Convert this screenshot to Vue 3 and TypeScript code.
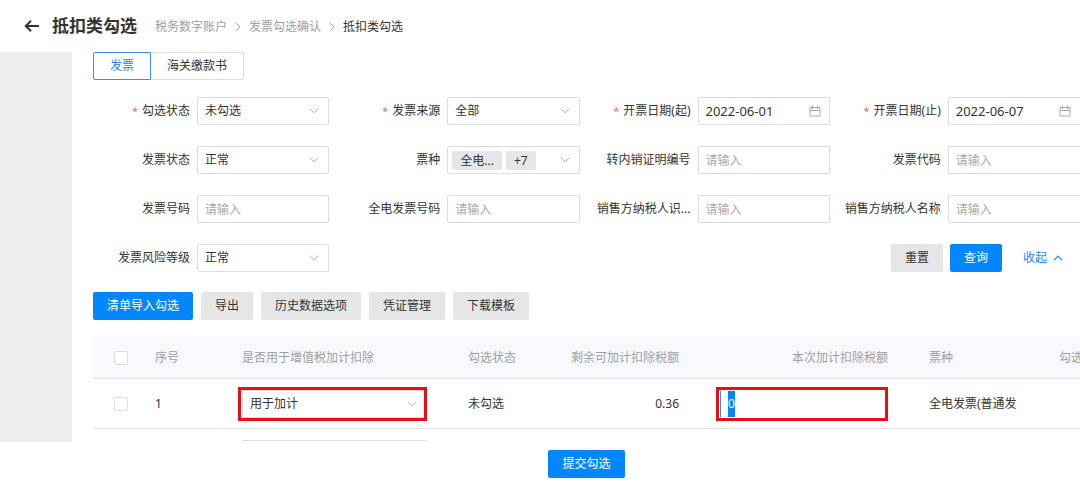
<script setup lang="ts">
import { onMounted, ref } from 'vue'

type Kind = 'select' | 'text' | 'date' | 'tags'
interface Field {
  id: string
  label: string
  kind: Kind
  value?: string
  required?: boolean
}

const fields = ref<Field[]>([
  { id: 'check-state', label: '勾选状态', kind: 'select', value: '未勾选', required: true },
  { id: 'source', label: '发票来源', kind: 'select', value: '全部', required: true },
  { id: 'date-from', label: '开票日期(起)', kind: 'date', value: '2022-06-01', required: true },
  { id: 'date-to', label: '开票日期(止)', kind: 'date', value: '2022-06-07', required: true },
  { id: 'state', label: '发票状态', kind: 'select', value: '正常' },
  { id: 'kind', label: '票种', kind: 'tags' },
  { id: 'export-no', label: '转内销证明编号', kind: 'text', value: '' },
  { id: 'code', label: '发票代码', kind: 'text', value: '' },
  { id: 'number', label: '发票号码', kind: 'text', value: '' },
  { id: 'e-number', label: '全电发票号码', kind: 'text', value: '' },
  { id: 'seller-id', label: '销售方纳税人识...', kind: 'text', value: '' },
  { id: 'seller-name', label: '销售方纳税人名称', kind: 'text', value: '' },
  { id: 'risk', label: '发票风险等级', kind: 'select', value: '正常' },
])

const tabs = ['发票', '海关缴款书']
const activeTab = ref('发票')
const tools = ['清单导入勾选', '导出', '历史数据选项', '凭证管理', '下载模板']
const usage = ref('用于加计')
const amount = ref('0')
const amountInput = ref<HTMLInputElement | null>(null)

onMounted(() => {
  amountInput.value?.focus({ preventScroll: true })
  amountInput.value?.select()
})
</script>

<template>
  <div class="page">
    <header class="top">
      <button class="back" type="button" aria-label="返回">
        <svg width="16" height="14" viewBox="0 0 16 14"><path d="M15 7H2M7 1.8 1.8 7 7 12.2" /></svg>
      </button>
      <h1>抵扣类勾选</h1>
      <nav class="crumbs">
        <a href="#">税务数字账户</a>
        <svg class="sep" width="6" height="10" viewBox="0 0 6 10"><path d="M1 1l4 4-4 4" /></svg>
        <a href="#">发票勾选确认</a>
        <svg class="sep" width="6" height="10" viewBox="0 0 6 10"><path d="M1 1l4 4-4 4" /></svg>
        <span class="current">抵扣类勾选</span>
      </nav>
    </header>

    <div class="body">
      <aside class="side"></aside>
      <main class="main">
        <div class="tabs">
          <button
            v-for="t in tabs"
            :key="t"
            type="button"
            class="tab"
            :class="{ active: t === activeTab }"
            @click="activeTab = t"
          >{{ t }}</button>
        </div>

        <form class="filters" @submit.prevent>
          <div v-for="f in fields" :key="f.id" class="field">
            <label :for="f.id"><span v-if="f.required" class="star">*</span>{{ f.label }}</label>
            <div class="control">
              <template v-if="f.kind === 'select'">
                <select :id="f.id" v-model="f.value" class="box">
                  <option>{{ f.value }}</option>
                </select>
                <svg class="chevron" width="10" height="6" viewBox="0 0 10 6"><path d="M1 .8l4 4 4-4" /></svg>
              </template>
              <template v-else-if="f.kind === 'tags'">
                <button :id="f.id" type="button" class="box tags">
                  <span class="tag">全电...</span>
                  <span class="tag">+7</span>
                </button>
                <svg class="chevron" width="10" height="6" viewBox="0 0 10 6"><path d="M1 .8l4 4 4-4" /></svg>
              </template>
              <template v-else-if="f.kind === 'date'">
                <input :id="f.id" v-model="f.value" type="text" class="box date" />
                <svg class="calendar" width="12" height="12" viewBox="0 0 12 12">
                  <path d="M1 2.5h10v8.5H1zM1 5.5h10M3.5 .5v3.5M8.5 .5v3.5" />
                </svg>
              </template>
              <input v-else :id="f.id" v-model="f.value" type="text" class="box" placeholder="请输入" />
            </div>
          </div>
          <div class="actions">
            <button type="button" class="btn">重置</button>
            <button type="submit" class="btn primary">查询</button>
            <a href="#" class="fold">收起
              <svg width="10" height="6" viewBox="0 0 10 6"><path d="M1 5.2l4-4 4 4" /></svg>
            </a>
          </div>
        </form>

        <div class="tools">
          <button v-for="(t, i) in tools" :key="t" type="button" class="btn" :class="{ primary: i === 0 }">{{ t }}</button>
        </div>

        <table>
          <colgroup>
            <col class="c-check" /><col class="c-no" /><col class="c-use" /><col class="c-state" />
            <col class="c-left" /><col class="c-amount" /><col class="c-kind" /><col class="c-more" />
          </colgroup>
          <thead>
            <tr>
              <th class="pick"><input type="checkbox" aria-label="全选" /></th>
              <th>序号</th>
              <th>是否用于增值税加计扣除</th>
              <th>勾选状态</th>
              <th class="num">剩余可加计扣除税额</th>
              <th class="num">本次加计扣除税额</th>
              <th>票种</th>
              <th>勾选</th>
            </tr>
          </thead>
          <tbody>
            <tr>
              <td class="pick"><input type="checkbox" aria-label="选择第1行" /></td>
              <td>1</td>
              <td>
                <div class="control marked">
                  <select v-model="usage" class="box" aria-label="是否用于增值税加计扣除">
                    <option>用于加计</option>
                  </select>
                  <svg class="chevron" width="10" height="6" viewBox="0 0 10 6"><path d="M1 .8l4 4 4-4" /></svg>
                </div>
              </td>
              <td>未勾选</td>
              <td class="num">0.36</td>
              <td>
                <div class="control marked">
                  <input ref="amountInput" v-model="amount" type="text" class="box amount" aria-label="本次加计扣除税额" />
                </div>
              </td>
              <td>全电发票(普通发</td>
              <td></td>
            </tr>
            <tr>
              <td></td>
              <td></td>
              <td>
                <div class="control">
                  <select class="box" aria-label="是否用于增值税加计扣除"></select>
                </div>
              </td>
              <td></td>
              <td></td>
              <td></td>
              <td></td>
              <td></td>
            </tr>
          </tbody>
        </table>
      </main>
    </div>

    <footer class="bottom">
      <button type="button" class="btn primary">提交勾选</button>
    </footer>
  </div>
</template>

<style>
body {
  margin: 0;
  background: #fff;
}
</style>

<style scoped>
.page {
  display: flex;
  flex-direction: column;
  height: 100vh;
  overflow: hidden;
  color: #333;
  font-family: "Noto Sans", "Noto Sans CJK SC", sans-serif;
  font-size: 12px;
  line-height: 18px;
}
.page * {
  box-sizing: border-box;
}
button,
input,
select {
  margin: 0;
  font: inherit;
  color: inherit;
}
svg {
  fill: none;
  stroke: #aaa;
  flex: none;
}
a {
  color: inherit;
  text-decoration: none;
}
.top {
  display: flex;
  align-items: center;
  height: 52px;
  flex: none;
  padding-left: 24px;
}
.back {
  display: flex;
  padding: 0;
  border: 0;
  background: none;
}
.back svg {
  stroke: #333;
  stroke-width: 2;
}
h1 {
  margin: 0 18px 0 12px;
  font-size: 17px;
  line-height: 24px;
  font-weight: 700;
}
.crumbs {
  display: flex;
  align-items: center;
  gap: 8px;
  padding-top: 2px;
  color: #a0a0a0;
}
.current {
  color: #333;
}
.body {
  display: flex;
  flex: 1;
  min-height: 0;
}
.side {
  width: 72px;
  flex: none;
  background: #ededed;
}
.main {
  flex: 1;
  min-width: 0;
  padding-left: 21px;
  overflow: hidden;
}
.tabs {
  display: flex;
}
.tab {
  height: 28px;
  padding: 0 16px;
  border: 1px solid #dcdcdc;
  border-radius: 0 2px 2px 0;
  background: #fff;
}
.tab + .tab {
  margin-left: -1px;
}
.tab.active {
  position: relative;
  border-color: #3a8ee6;
  border-radius: 2px 0 0 2px;
  color: #1e88f0;
}
.filters {
  display: grid;
  grid-template-columns: repeat(4, minmax(0, 1fr));
  gap: 21px 14px;
  margin-top: 17px;
}
.field {
  display: flex;
  align-items: center;
  gap: 7px;
  min-width: 0;
}
.field label {
  width: 97px;
  flex: none;
  text-align: right;
  white-space: nowrap;
}
.star {
  margin-right: 4px;
  color: #f56c6c;
  font-size: 11px;
}
.control {
  position: relative;
  display: flex;
  flex: 1;
  min-width: 0;
}
.box {
  width: 100%;
  height: 28px;
  padding: 0 7px;
  border: 1px solid #dcdcdc;
  border-radius: 2px;
  outline: 0;
  background: #fff;
  appearance: none;
}
.field:nth-child(4n) .box {
  border-right: 0;
  border-radius: 2px 0 0 2px;
}
.box::placeholder {
  color: #aaa;
}
.date {
  font-size: 13px;
}
.chevron {
  position: absolute;
  right: 10px;
  top: 11px;
}
.calendar {
  position: absolute;
  right: 9px;
  top: 8px;
}
.tags {
  display: flex;
  align-items: center;
  gap: 4px;
  padding: 0 4px;
}
.tag {
  padding: 0 8px;
  border-radius: 2px;
  background: #e6e6e6;
  line-height: 19px;
}
.actions {
  display: flex;
  grid-column: 3 / 5;
  align-items: center;
  justify-content: flex-end;
  gap: 7px;
  padding-right: 17px;
}
.fold {
  display: flex;
  align-items: center;
  gap: 6px;
  margin-left: 14px;
  color: #1e88f0;
}
.fold svg {
  stroke: #1e88f0;
  stroke-width: 1.2;
}
.btn {
  height: 28px;
  padding: 0 14px;
  border: 0;
  border-radius: 2px;
  background: #e6e6e6;
  white-space: nowrap;
}
.btn.primary {
  background: #0486fe;
  color: #fff;
}
.tools {
  display: flex;
  gap: 8px;
  margin: 20px 0 17px;
}
table {
  width: 1072px;
  border-collapse: separate;
  border-spacing: 0;
  table-layout: fixed;
}
.c-check { width: 48px; }
.c-no { width: 87px; }
.c-use { width: 226px; }
.c-state { width: 100px; }
.c-left { width: 152px; }
.c-amount { width: 209px; }
.c-kind { width: 130px; }
th,
td {
  height: 50px;
  padding: 0 27px 0 14px;
  border-bottom: 1px solid #e2e2e2;
  text-align: left;
  white-space: nowrap;
}
th {
  height: 42px;
  background: #f8f9fe;
  color: #a0a0a0;
  font-weight: 400;
}
.num {
  text-align: right;
}
.pick {
  padding: 0 0 0 21px;
}
.pick input {
  display: block;
  width: 14px;
  height: 14px;
  border: 1px solid #dcdcdc;
  border-radius: 2px;
  background: #fff;
  appearance: none;
}
.marked::after {
  content: "";
  position: absolute;
  inset: -3px 0 -3px -4px;
  border: 3px solid #e60f12;
  pointer-events: none;
}
.amount {
  border-color: transparent transparent transparent #3a8ee6;
  border-radius: 0;
}
.amount:focus {
  background: linear-gradient(#0486fe, #0486fe) 7px 0 / 7px 100% no-repeat #fff;
}
.amount::selection {
  background: #0486fe;
  color: #fff;
}
.bottom {
  display: flex;
  justify-content: center;
  flex: none;
  padding: 8px 0 10px 93px;
}
</style>
